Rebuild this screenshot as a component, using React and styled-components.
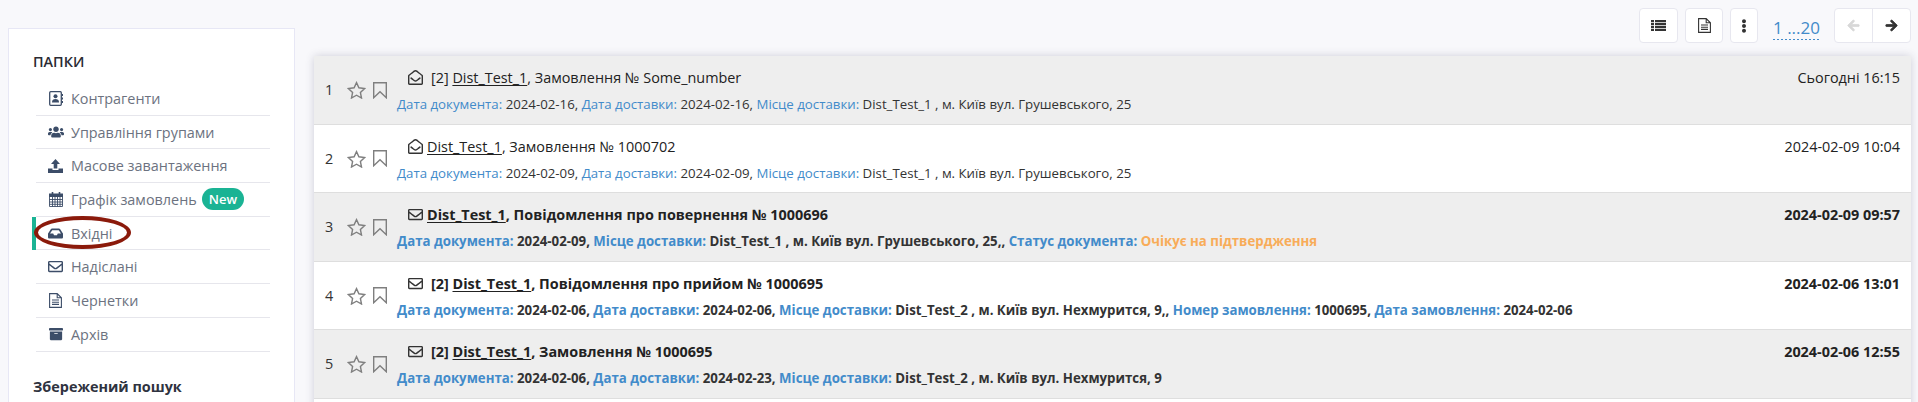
import React from 'react';
import styled, { createGlobalStyle } from 'styled-components';
import {
  FaUsers, FaInbox, FaRegEnvelope, FaArchive,
  FaRegEnvelopeOpen, FaEllipsisV, FaArrowLeft, FaArrowRight,
} from 'react-icons/fa';

const Global = createGlobalStyle`
  html, body { margin: 0; padding: 0; height: 402px; overflow: hidden; background: #f8f8fb; }
  body { font-family: "Open Sans", "Noto Sans", sans-serif; color: #333; }
`;

const Page = styled.div`
  display: flex;
  align-items: flex-start;
  height: 402px;
  overflow: hidden;
  padding: 8px 7px 0 8px;
  box-sizing: border-box;
  gap: 19px;
`;

const Sidebar = styled.aside`
  width: 287px;
  height: 420px;
  flex: none;
  margin-top: 20px;
  box-sizing: border-box;
  background: #fff;
  border: 1px solid #e7e7f5;
  padding: 23px 24px 0 24px;
`;

const SideTitle = styled.div`
  font-size: 14.4px;
  font-weight: 600;
  line-height: 20px;
  color: #2b2b33;
  text-transform: uppercase;
`;

const Menu = styled.ul`
  list-style: none;
  margin: 10px 0 0;
  padding: 0 0 0 3px;
`;

const MenuItem = styled.li`
  position: relative;
  display: flex;
  align-items: center;
  height: 33.7px;
  box-sizing: border-box;
  border-bottom: 1.5px solid #e6e6ec;
  font-size: 14.4px;
  color: #6c7280;
  padding-left: 11px;
  gap: 7px;
`;

const ActiveBar = styled.span`
  position: absolute;
  left: -4px;
  top: 0;
  bottom: -1px;
  width: 4px;
  background: #1ab394;
`;

const Ring = styled.span`
  position: absolute;
  left: -2px;
  top: -1px;
  width: 97px;
  height: 33px;
  box-sizing: border-box;
  border: 4px solid #8b1a0b;
  border-radius: 50%;
`;

const IconSlot = styled.span`
  width: 17px;
  flex: none;
  display: flex;
  justify-content: center;
  color: #3c4d68;
  font-size: ${p => p.$size || 15}px;
`;

const Badge = styled.span`
  background: #1ab394;
  color: #fff;
  font-size: 13px;
  font-weight: 600;
  line-height: 22px;
  height: 22px;
  padding: 0 7px;
  border-radius: 11px;
  margin-left: -2px;
`;

const SavedTitle = styled.div`
  font-size: 14.4px;
  font-weight: 700;
  line-height: 20px;
  color: #2f3340;
  margin-top: 25px;
`;

const Main = styled.main`
  flex: 1;
  min-width: 0;
  display: flex;
  flex-direction: column;
`;

const Toolbar = styled.div`
  display: flex;
  justify-content: flex-end;
  align-items: flex-start;
  height: 35px;
  margin-bottom: 13px;
`;

const ToolButton = styled.button`
  width: ${p => p.$w}px;
  height: 35px;
  margin-left: ${p => p.$ml || 0}px;
  box-sizing: border-box;
  background: #fff;
  border: 1px solid #e7e7ef;
  border-radius: 4px;
  padding: 0;
  display: flex;
  align-items: center;
  justify-content: center;
  color: #333;
  font-size: 14px;
`;

const Paging = styled.a`
  margin: 8px 0 0 15px;
  width: 47px;
  text-align: center;
  white-space: nowrap;
  font-size: 17px;
  line-height: 24px;
  height: 24px;
  color: #428bca;
  background: linear-gradient(to right, #428bca 50%, transparent 0) left bottom / 4px 1px repeat-x;
`;

const Pager = styled.div`
  display: flex;
  margin-left: 14px;
  background: #fff;
  border: 1px solid #e7e7ef;
  border-radius: 4px;
  height: 35px;
  box-sizing: border-box;
`;

const PagerCell = styled.span`
  width: 37px;
  display: flex;
  align-items: center;
  justify-content: center;
  font-size: 13px;
  color: ${p => (p.$off ? '#d8d8d8' : '#333')};
  & + & { border-left: 1px solid #e7e7ef; }
  svg { stroke: currentColor; stroke-width: 30; }
`;

const List = styled.div`
  background: #fff;
  box-shadow: 0 0 8px rgba(60, 60, 90, 0.22);
  border-radius: 2px 2px 0 0;
  height: 400px;
`;

const Row = styled.div`
  display: flex;
  height: 68.6px;
  box-sizing: border-box;
  background: ${p => (p.$odd ? '#eeeeee' : '#fff')};
  border-bottom: 1.5px solid #dedede;
  font-weight: ${p => (p.$unread ? 700 : 400)};
`;

const Num = styled.span`
  width: 22px;
  margin-left: 11px;
  flex: none;
  font-size: 14.4px;
  font-weight: 400;
  line-height: 20px;
  margin-top: 24px;
  color: #333;
`;

const Marks = styled.span`
  display: flex;
  gap: 7px;
  width: 50px;
  flex: none;
  margin-top: 23px;
  height: 22px;
  color: #7f7f7f;
  align-items: center;
`;

const Body = styled.div`
  flex: 1;
  min-width: 0;
  padding-top: 10.5px;
`;

const TitleLine = styled.div`
  display: flex;
  align-items: center;
  height: 22px;
  padding-left: 11px;
  font-size: 14.4px;
  color: #222;
`;

const Envelope = styled.span`
  display: flex;
  width: ${p => (p.$wide ? 23 : 19)}px;
  flex: none;
  font-size: 15px;
  color: #333;
`;

const Sender = styled.u`
  text-underline-offset: 2px;
`;

const Time = styled.span`
  margin-left: auto;
  padding-right: 11px;
`;

const Meta = styled.div`
  margin-top: 6.5px;
  font-size: 13.26px;
  line-height: 18px;
  color: #333;
  white-space: pre;
`;

const Label = styled.span`
  color: #428bca;
`;

const Pending = styled.span`
  color: #f8ac59;
`;

const AddressIcon = () => (
  <svg width="14" height="15" viewBox="0 0 14 15">
    <rect x="0.7" y="0.7" width="11.6" height="13.6" rx="1" fill="none" stroke="currentColor" strokeWidth="1.3" />
    <path d="M13 3h1v2h-1zM13 6.5h1v2h-1zM13 10h1v2h-1z" fill="currentColor" />
    <circle cx="6.5" cy="5.3" r="2" fill="currentColor" />
    <path d="M3 11.5c0-2.4 1.4-3.4 3.5-3.4s3.5 1 3.5 3.4z" fill="currentColor" />
  </svg>
);

const UploadIcon = () => (
  <svg width="15" height="14" viewBox="0 0 15 14" fill="currentColor">
    <path d="M7.5 0L12 5H9.3V9.5H5.7V5H3z" />
    <path d="M0 9.5h4.5v1.4h6V9.5H15V14H0z" />
  </svg>
);

const CalendarIcon = () => (
  <svg width="14" height="15" viewBox="0 0 14 15" fill="none" stroke="currentColor">
    <path d="M0 1.5h14V5H0z" fill="currentColor" stroke="none" />
    <path d="M.5 4.5h13v10H.5zM.5 7.5h13M.5 10h13M.5 12.3h13M3.5 4.5v10M6 4.5v10M8.5 4.5v10M11 4.5v10" strokeWidth="0.9" />
    <path d="M3.5 0v3M10.5 0v3" strokeWidth="1.6" />
  </svg>
);

const FileIcon = () => (
  <svg width="13" height="15" viewBox="0 0 13 15" fill="none" stroke="currentColor" strokeWidth="1.1">
    <path d="M.6.6h7.6l4.2 4.2v9.6H.6zM8.2.6v4.2h4.2" />
    <path d="M3 7h7M3 9.2h7M3 11.4h7" />
  </svg>
);

const ListIcon = () => (
  <svg width="15" height="11" viewBox="0 0 15 11" fill="currentColor">
    <path d="M0 0h3v2.2H0zM4 0h11v2.2H4zM0 2.9h3v2.2H0zM4 2.9h11v2.2H4zM0 5.8h3V8H0zM4 5.8h11V8H4zM0 8.7h3V11H0zM4 8.7h11V11H4z" />
  </svg>
);

const StarIcon = () => (
  <svg width="19" height="18" viewBox="0 0 19 18" fill="none" stroke="currentColor" strokeWidth="1.4" strokeLinejoin="miter">
    <path d="M9.5 1.6l2.4 5.2 5.7.7-4.2 3.9 1.1 5.6-5-2.8-5 2.8 1.1-5.6L1.4 7.5l5.7-.7z" />
  </svg>
);

const BookmarkIcon = () => (
  <svg width="14" height="17" viewBox="0 0 14 17" fill="none" stroke="currentColor" strokeWidth="1.4">
    <path d="M.7.7h12.6v15l-6.3-6-6.3 6z" />
  </svg>
);

const menu = [
  { icon: <AddressIcon />, text: 'Контрагенти' },
  { icon: <FaUsers />, size: 16, text: 'Управління групами' },
  { icon: <UploadIcon />, text: 'Масове завантаження' },
  { icon: <CalendarIcon />, text: 'Графік замовлень', badge: 'New' },
  { icon: <FaInbox />, text: 'Вхідні', active: true },
  { icon: <FaRegEnvelope />, text: 'Надіслані' },
  { icon: <FileIcon />, text: 'Чернетки' },
  { icon: <FaArchive />, size: 14, text: 'Архів' },
];

const rows = [
  {
    n: 1, read: true, count: true, subject: 'Замовлення № Some_number', time: 'Сьогодні 16:15',
    meta: [['Дата документа:', '2024-02-16, '], ['Дата доставки:', '2024-02-16, '], ['Місце доставки:', 'Dist_Test_1 , м. Київ вул. Грушевського, 25']],
  },
  {
    n: 2, read: true, subject: 'Замовлення № 1000702', time: '2024-02-09 10:04',
    meta: [['Дата документа:', '2024-02-09, '], ['Дата доставки:', '2024-02-09, '], ['Місце доставки:', 'Dist_Test_1 , м. Київ вул. Грушевського, 25']],
  },
  {
    n: 3, subject: 'Повідомлення про повернення № 1000696', time: '2024-02-09 09:57', pending: 'Очікує на підтвердження',
    meta: [['Дата документа:', '2024-02-09, '], ['Місце доставки:', 'Dist_Test_1 , м. Київ вул. Грушевського, 25,, ']],
  },
  {
    n: 4, count: true, subject: 'Повідомлення про прийом № 1000695', time: '2024-02-06 13:01',
    meta: [['Дата документа:', '2024-02-06, '], ['Дата доставки:', '2024-02-06, '], ['Місце доставки:', 'Dist_Test_2 , м. Київ вул. Нехмурится, 9,, '], ['Номер замовлення:', '1000695, '], ['Дата замовлення:', '2024-02-06']],
  },
  {
    n: 5, count: true, subject: 'Замовлення № 1000695', time: '2024-02-06 12:55',
    meta: [['Дата документа:', '2024-02-06, '], ['Дата доставки:', '2024-02-23, '], ['Місце доставки:', 'Dist_Test_2 , м. Київ вул. Нехмурится, 9']],
  },
];

export default function App() {
  return (
    <>
      <Global />
      <Page>
        <Sidebar>
          <SideTitle>Папки</SideTitle>
          <Menu>
            {menu.map(m => (
              <MenuItem key={m.text}>
                {m.active && <ActiveBar />}
                {m.active && <Ring />}
                <IconSlot $size={m.size}>{m.icon}</IconSlot>
                <span>{m.text}</span>
                {m.badge && <Badge>{m.badge}</Badge>}
              </MenuItem>
            ))}
          </Menu>
          <SavedTitle>Збережений пошук</SavedTitle>
        </Sidebar>
        <Main>
          <Toolbar>
            <ToolButton $w={39}><ListIcon /></ToolButton>
            <ToolButton $w={38} $ml={7}><FileIcon /></ToolButton>
            <ToolButton $w={28} $ml={7}><FaEllipsisV /></ToolButton>
            <Paging>1 ...20</Paging>
            <Pager>
              <PagerCell $off><FaArrowLeft /></PagerCell>
              <PagerCell><FaArrowRight /></PagerCell>
            </Pager>
          </Toolbar>
          <List>
            {rows.map(r => (
              <Row key={r.n} $odd={r.n % 2 === 1} $unread={!r.read}>
                <Num>{r.n}</Num>
                <Marks><StarIcon /><BookmarkIcon /></Marks>
                <Body>
                  <TitleLine>
                    <Envelope $wide={r.count}>{r.read ? <FaRegEnvelopeOpen /> : <FaRegEnvelope />}</Envelope>
                    <span>
                      {r.count ? '[2] ' : ''}<Sender>Dist_Test_1</Sender>, {r.subject}
                    </span>
                    <Time>{r.time}</Time>
                  </TitleLine>
                  <Meta>
                    {r.meta.map(([k, v]) => (
                      <React.Fragment key={k}><Label>{k}</Label> {v}</React.Fragment>
                    ))}
                    {r.pending && <><Label>Статус документа:</Label> <Pending>{r.pending}</Pending></>}
                  </Meta>
                </Body>
              </Row>
            ))}
          </List>
        </Main>
      </Page>
    </>
  );
}
